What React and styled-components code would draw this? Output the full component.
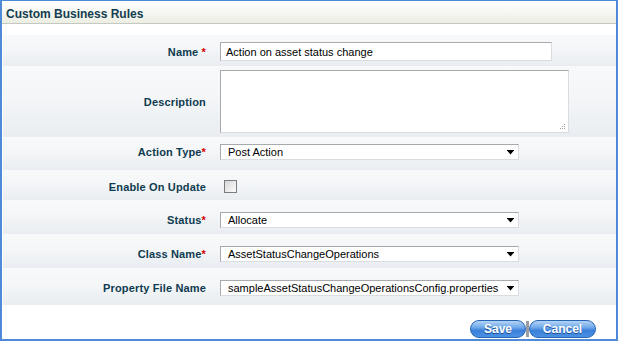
import React from 'react';
import styled, { createGlobalStyle } from 'styled-components';

const GlobalStyle = createGlobalStyle`
  body {
    margin: 0;
    background: #fff;
    font-family: "Liberation Sans", Arial, sans-serif;
  }
`;

const Frame = styled.div`
  box-sizing: border-box;
  width: 618px;
  height: 341px;
  border: 2px solid #4f8ad9;
  border-top-width: 1px;
  background: #fff;
  display: flex;
  flex-direction: column;
  overflow: hidden;
`;

const Header = styled.div`
  height: 23px;
  border-bottom: 1px solid #c6c9bf;
  background: linear-gradient(to bottom, #ffffff 0%, #f7f8f3 45%, #eceee3 100%);
  padding: 3px 0 0 4px;
  box-sizing: border-box;
  display: flex;
  align-items: center;
  font-size: 12px;
  font-weight: bold;
  color: #123d50;
`;

const Form = styled.div`
  margin: 11px 0 0 1px;
  display: flex;
  flex-direction: column;
`;

const Row = styled.div`
  box-sizing: border-box;
  height: ${p => p.h}px;
  padding-top: ${p => p.top}px;
  display: grid;
  grid-template-columns: 204px 1fr;
  grid-template-rows: ${p => p.field}px;
  column-gap: 13px;
  align-items: center;
  background: linear-gradient(to bottom, #f8f9fa 0%, #f4f6f8 45%, #e9edf1 100%);
`;

const Label = styled.div`
  text-align: right;
  padding-right: 1px;
  font-size: 11px;
  font-weight: bold;
  letter-spacing: 0.15px;
  color: #0f3b50;
  white-space: nowrap;
`;

const Req = styled.span`
  color: #d40000;
`;

const TextInput = styled.div`
  box-sizing: border-box;
  width: 332px;
  height: 19px;
  border: 1px solid;
  border-color: #a7a9ad #d9dce0 #d9dce0 #a7a9ad;
  background: #fff;
  padding-left: 5px;
  display: flex;
  align-items: center;
  font-size: 11px;
  color: #000;
`;

const AreaWrap = styled.div`
  position: relative;
  width: 349px;
  height: 63px;
`;

const TextArea = styled.textarea`
  box-sizing: border-box;
  width: 349px;
  height: 63px;
  margin: 0;
  resize: none;
  border: 1px solid;
  border-color: #a7a9ad #d9dce0 #d9dce0 #a7a9ad;
  background: #fff;
  display: block;
  outline: none;
`;

const Grip = styled.svg`
  position: absolute;
  right: 3px;
  bottom: 3px;
`;

const Select = styled.div`
  box-sizing: border-box;
  width: 299px;
  height: 16px;
  border: 1px solid;
  border-color: #a7a9ad #d9dce0 #d9dce0 #a7a9ad;
  background: #fff;
  padding: 0 4px 0 7px;
  display: flex;
  align-items: center;
  justify-content: space-between;
  font-size: 11px;
  color: #000;
  white-space: nowrap;
`;

const Check = styled.div`
  box-sizing: border-box;
  margin-left: 4px;
  width: 13px;
  height: 13px;
  border: 1px solid #7b7d80;
  background: linear-gradient(135deg, #d6d7d9 0%, #ececec 55%, #fbfbfb 100%);
`;

const Actions = styled.div`
  margin-top: 15px;
  padding-right: 20px;
  display: flex;
  justify-content: flex-end;
  align-items: center;
`;

const Button = styled.button`
  box-sizing: border-box;
  width: ${p => p.w}px;
  height: 18px;
  margin: 0;
  padding: 0;
  border: 1px solid #2563b5;
  border-radius: 9px;
  background: linear-gradient(to bottom, #b4d4f6 0%, #70a9ea 40%, #3a80da 60%, #4b91e3 100%);
  color: #fff;
  font-family: "Liberation Sans", Arial, sans-serif;
  font-size: 12px;
  font-weight: bold;
  text-shadow: 0 1px 0 #1c4f92;
  cursor: pointer;
`;

const Divider = styled.div`
  width: 3px;
  height: 16px;
  background: #9a9ea3;
`;

const Arrow = () => (
  <svg width="7" height="5" viewBox="0 0 7 5">
    <rect x="0" y="0" width="7" height="1" fill="#000" />
    <polygon points="0.5,1 6.5,1 3.5,4.5" fill="#000" />
  </svg>
);

const Dropdown = ({ value }) => (
  <Select>
    <span>{value}</span>
    <Arrow />
  </Select>
);

export default function App() {
  return (
    <>
      <GlobalStyle />
      <Frame>
        <Header>Custom Business Rules</Header>
        <Form>
          <Row h={31} top={7} field={19}>
            <Label>Name <Req>*</Req></Label>
            <TextInput>Action on asset status change</TextInput>
          </Row>
          <Row h={71} top={4} field={63}>
            <Label>Description</Label>
            <AreaWrap>
              <TextArea />
              <Grip width="6" height="6" viewBox="0 0 6 6">
                <rect x="4" y="0" width="1" height="1" fill="#a0a0a0" />
                <rect x="2" y="2" width="1" height="1" fill="#a0a0a0" />
                <rect x="4" y="2" width="1" height="1" fill="#a0a0a0" />
                <rect x="0" y="4" width="1" height="1" fill="#a0a0a0" />
                <rect x="2" y="4" width="1" height="1" fill="#a0a0a0" />
                <rect x="4" y="4" width="1" height="1" fill="#a0a0a0" />
              </Grip>
            </AreaWrap>
          </Row>
          <Row h={33} top={7} field={16}>
            <Label>Action Type<Req>*</Req></Label>
            <Dropdown value="Post Action" />
          </Row>
          <Row h={30} top={10} field={13}>
            <Label>Enable On Update</Label>
            <Check />
          </Row>
          <Row h={34} top={12} field={16}>
            <Label>Status<Req>*</Req></Label>
            <Dropdown value="Allocate" />
          </Row>
          <Row h={34} top={12} field={16}>
            <Label>Class Name<Req>*</Req></Label>
            <Dropdown value="AssetStatusChangeOperations" />
          </Row>
          <Row h={37} top={12} field={16}>
            <Label>Property File Name</Label>
            <Dropdown value="sampleAssetStatusChangeOperationsConfig.properties" />
          </Row>
        </Form>
        <Actions>
          <Button w={56}>Save</Button>
          <Divider />
          <Button w={67}>Cancel</Button>
        </Actions>
      </Frame>
    </>
  );
}
